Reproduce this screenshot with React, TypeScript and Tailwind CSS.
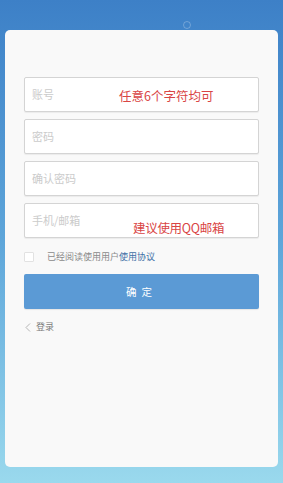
const font = { fontFamily: '"Noto Sans CJK SC", "Noto Sans", sans-serif' };

function Field({ placeholder, note, noteClass }: { placeholder: string; note?: string; noteClass?: string }) {
  return (
    <div className="relative h-[35px] w-full rounded-[2px] border border-[#d4d4d4] bg-white shadow-[0_1px_1px_rgba(0,0,0,0.06)]">
      <span className="absolute left-[7px] top-[9px] text-[11px] leading-[14px] text-[#cbcbcb]">{placeholder}</span>
      {note && (
        <span className={`absolute whitespace-nowrap text-[12.5px] leading-[16px] text-[#d94545] ${noteClass}`}>{note}</span>
      )}
    </div>
  );
}

export default function App() {
  return (
    <div
      className="flex h-[483px] w-full flex-col bg-gradient-to-b from-[#3d80c7] via-[#5ea6da] to-[#9ad9ed] px-[5px] pb-[16px] pt-[30px]"
      style={font}
    >
      <div className="relative">
        <div className="absolute left-[178px] top-[-9px] h-[8px] w-[8px] rounded-full border border-white/25" />
      </div>
      <div className="flex flex-1 flex-col rounded-[5px] bg-[#f9f9f9] px-[19px] pt-[47px]">
        <div className="flex flex-col gap-[7px]">
          <Field placeholder="账号" note="任意6个字符均可" noteClass="left-[94px] top-[10px]" />
          <Field placeholder="密码" />
          <Field placeholder="确认密码" />
          <Field placeholder="手机/邮箱" note="建议使用QQ邮箱" noteClass="left-[108px] top-[16px] tracking-[-0.3px]" />
        </div>

        <div className="mt-[14px] flex h-[10px] items-center">
          <div className="h-[10px] w-[10px] rounded-[1px] border border-[#e2e2e2] bg-white" />
          <span className="ml-[13px] text-[9px] leading-[12px] text-[#8a8a8a]">
            已经阅读使用用户<span className="text-[#3f6fa6]">使用协议</span>
          </span>
        </div>

        <button className="mt-[12px] flex h-[35px] w-full items-center justify-center rounded-[2px] bg-[#5b9ad5] text-[10.5px] tracking-[5px] text-white shadow-[0_1px_1px_rgba(0,0,0,0.08)]">
          确定
        </button>

        <div className="mt-[11px] flex h-[14px] items-center text-[9px] text-[#7a7a7a]">
          <svg width="6" height="9" viewBox="0 0 6 9" className="ml-[1px]">
            <path d="M5 0.5 L1 4.5 L5 8.5" fill="none" stroke="#b5b5b5" strokeWidth="1" />
          </svg>
          <span className="ml-[5px]">登录</span>
        </div>
      </div>
    </div>
  );
}
